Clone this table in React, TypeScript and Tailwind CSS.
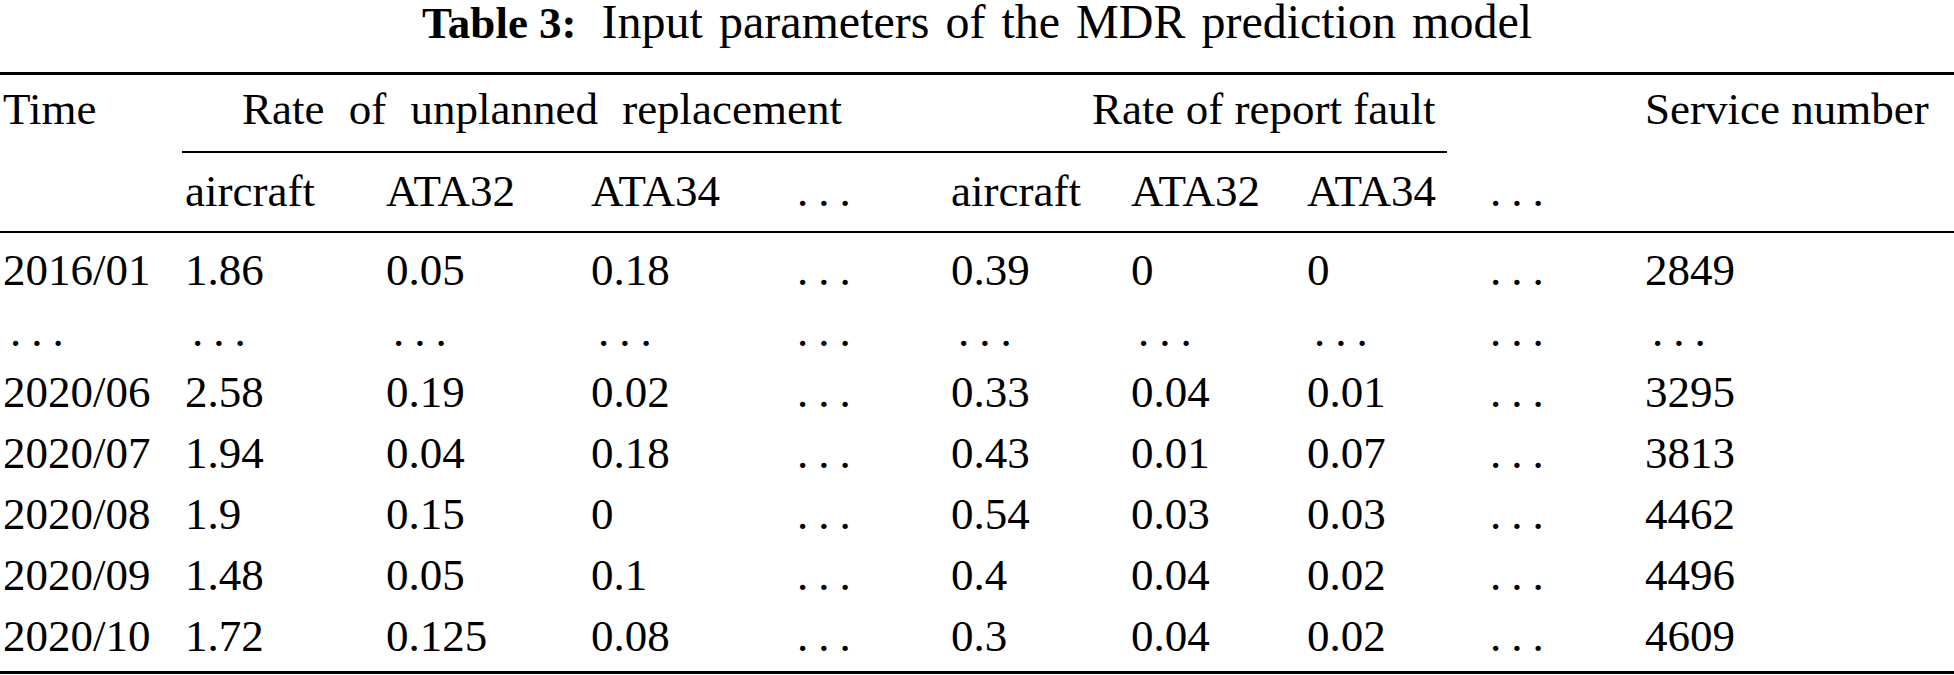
const COLS =
  'grid grid-cols-[182px_201px_205px_199px_161px_180px_176px_176px_162px_1fr] pl-[3px] leading-[61px] whitespace-nowrap';

const ROWS: string[][] = [
  ['2016/01', '1.86', '0.05', '0.18', '…', '0.39', '0', '0', '…', '2849'],
  ['…', '…', '…', '…', '…', '…', '…', '…', '…', '…'],
  ['2020/06', '2.58', '0.19', '0.02', '…', '0.33', '0.04', '0.01', '…', '3295'],
  ['2020/07', '1.94', '0.04', '0.18', '…', '0.43', '0.01', '0.07', '…', '3813'],
  ['2020/08', '1.9', '0.15', '0', '…', '0.54', '0.03', '0.03', '…', '4462'],
  ['2020/09', '1.48', '0.05', '0.1', '…', '0.4', '0.04', '0.02', '…', '4496'],
  ['2020/10', '1.72', '0.125', '0.08', '…', '0.3', '0.04', '0.02', '…', '4609'],
];

const SUB = ['aircraft', 'ATA32', 'ATA34', '…'];

// LaTeX-style \dots: wider gaps than the unicode ellipsis glyph
function Cell({ text }: { text: string }) {
  if (text === '…') {
    return <div className="pl-[7px] tracking-[10px]">...</div>;
  }
  return <div>{text}</div>;
}

export default function App() {
  return (
    <div className="w-[1954px] h-[675px] overflow-hidden bg-white text-black font-['Liberation_Serif','Times_New_Roman',serif] text-[45px]">
      {/* caption */}
      <div className="h-[72px] text-center leading-[44px] whitespace-nowrap">
        <span className="font-bold">Table 3:</span>
        <span className="ml-[25px] text-[48px] [word-spacing:4px]">
          Input parameters of the MDR prediction model
        </span>
      </div>
      <div className="h-[3px] bg-black" />

      {/* header */}
      <div className={`${COLS} mt-[4px]`}>
        <div>Time</div>
        <div className="col-span-4 pl-[57px] [word-spacing:13px]">Rate of unplanned replacement</div>
        <div className="col-span-4 pl-[141px]">Rate of report fault</div>
        <div>Service number</div>
      </div>
      <div className="mt-[11px] ml-[182px] flex">
        <div className="h-[2px] w-[611px] bg-black" />
        <div className="h-[2px] w-[654px] bg-black" />
      </div>
      <div className={`${COLS} mt-[8px]`}>
        <div />
        {SUB.map((s, i) => (
          <Cell key={'a' + i} text={s} />
        ))}
        {SUB.map((s, i) => (
          <Cell key={'b' + i} text={s} />
        ))}
        <div />
      </div>
      <div className="mt-[9px] h-[2px] bg-black" />

      {/* body */}
      <div className="mt-[7px]">
        {ROWS.map((row, r) => (
          <div key={r} className={COLS}>
            {row.map((c, i) => (
              <Cell key={i} text={c} />
            ))}
          </div>
        ))}
      </div>
      <div className="mt-[4px] h-[3px] bg-black" />
    </div>
  );
}
